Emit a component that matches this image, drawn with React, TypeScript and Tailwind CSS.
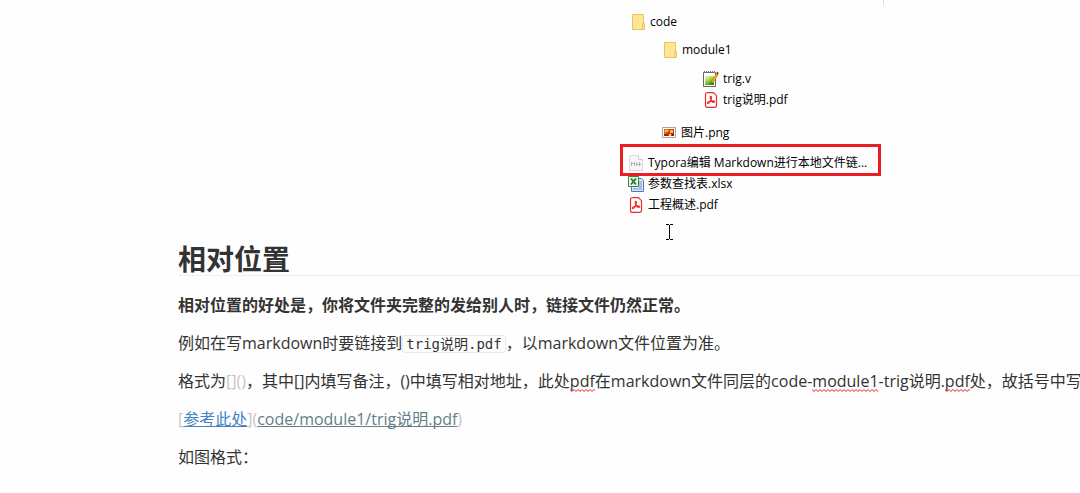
import type { ReactNode } from "react";

function FolderIcon() {
  return (
    <svg viewBox="0 0 16 16" className="size-4 shrink-0" aria-hidden="true">
      <path d="M2.5.5h11v9h1v6h-12z" fill="#ffe596" stroke="#e9c655" />
      <path d="M12.5 15.5v-5l2-1v6z" fill="#ffe596" stroke="#e9c655" />
    </svg>
  );
}

function NotepadIcon() {
  return (
    <svg viewBox="0 0 16 16" className="size-4 shrink-0" aria-hidden="true">
      <defs>
        <linearGradient id="note" x1="0" y1="0" x2="0.6" y2="1">
          <stop offset="0" stopColor="#f1f7cf" />
          <stop offset="0.5" stopColor="#a9d548" />
          <stop offset="1" stopColor="#2f8f1c" />
        </linearGradient>
      </defs>
      <path d="M.5 1.5h12v14H.5z" fill="#fff" stroke="#666" />
      <path d="M1 1h11" stroke="#777" strokeWidth="2" strokeDasharray="1 1" />
      <path d="M2 5h9v9H2z" fill="url(#note)" />
      <path d="M8.300 12.600l.5-2.600 4.600-7.600 1.900 1.200-4.700 7.400z" fill="#f3a71b" stroke="#b97a18" strokeWidth=".5" />
      <path d="M13.200 2.400l1-1.700 1.600 1-1 1.800z" fill="#a51d2c" />
      <path d="M8.300 12.800l.3-1.500.9.6z" fill="#222" />
    </svg>
  );
}

function PdfIcon() {
  return (
    <svg viewBox="0 0 16 16" className="size-4 shrink-0" aria-hidden="true">
      <path
        d="M4 .6h6.400l3.100 3.100v9.900q0 1.700-1.700 1.700H4.200q-1.700 0-1.700-1.700V2.300Q2.500.6 4.200.6z"
        fill="#fff"
        stroke="#ee2b28"
        strokeWidth="1.200"
      />
      <path
        d="M7.900 4.300c1.100 0 .9 1.600.2 3.200-.9 2.100-2.100 4-3.100 4-1 0-.9-1.200.5-1.800 1.400-.6 3.400-1 4.900-.8 1.500.200 1.500 1.500.4 1.500-1.200 0-2.700-1.500-3.300-3.200-.5-1.600-.5-2.900.4-2.900z"
        fill="none"
        stroke="#ee2b28"
        strokeWidth="1.100"
      />
    </svg>
  );
}

function PictureIcon() {
  return (
    <svg viewBox="0 0 16 16" className="size-4 shrink-0" aria-hidden="true">
      <path d="M1.500 2.500h13v10h-13z" fill="#fff" stroke="#a5a5a5" />
      <path d="M3 4h10v7H3z" fill="#c8371b" />
      <path d="M3 4h5v3H6v2H3z" fill="#e26b1d" />
      <path d="M4 5h3v2H4zM9 5h3v3H9z" fill="#f9b93c" />
      <path d="M3 9h4v2H3z" fill="#a32018" />
      <path d="M8 9h2v2H8z" fill="#ffd35a" />
      <path d="M11 9h2v2h-2z" fill="#7a1710" />
    </svg>
  );
}

function MarkdownIcon() {
  return (
    <svg viewBox="0 0 16 16" className="size-4 shrink-0" aria-hidden="true">
      <path d="M1.500.5h9l4 4v11h-13z" fill="#f6f6f6" stroke="#dcdcdc" />
      <path d="M10.500.5v4h4" fill="#fff" stroke="#cdcdcd" />
      <path d="M3.500 11V7M6.500 11V7M4 8.500h2M8.500 7v4M11.500 7v4M8 9.500h5" fill="none" stroke="#b0b0b0" />
    </svg>
  );
}

function SheetIcon() {
  return (
    <svg viewBox="0 0 16 16" className="size-4 shrink-0" aria-hidden="true">
      <path d="M5.500 2.500h8l2 2v11h-12v-5" fill="#dce8f8" stroke="#5878ac" />
      <path d="M11 5h3v8h-3zM5 12h9v2H5z" fill="#a3c0ea" />
      <path d="M.5.500h10v10H.5z" fill="#eef7ea" stroke="#3c8038" />
      <path d="M3 2.500l5 6M8 2.500l-5 6" stroke="#267a29" strokeWidth="1.900" />
    </svg>
  );
}

function FileRow({ icon, children, className = "" }: { icon: ReactNode; children: ReactNode; className?: string }) {
  return (
    <li className={`relative flex h-[21px] items-center gap-1 ${className}`}>
      {icon}
      <span>{children}</span>
    </li>
  );
}

function Misspelled({ id, children }: { id: string; children: ReactNode }) {
  return (
    <span className="relative inline-block">
      {children}
      <svg className="absolute bottom-0.5 left-0 h-[3px] w-full" aria-hidden="true">
        <defs>
          <pattern id={id} width="4" height="3" patternUnits="userSpaceOnUse">
            <path d="M-1 1.500L0 .5l2 2 2-2 1 1" fill="none" stroke="#f01818" />
          </pattern>
        </defs>
        <rect width="100%" height="3" fill={`url(#${id})`} />
      </svg>
    </span>
  );
}

export default function App() {
  return (
    <main className="min-h-screen overflow-hidden bg-[#fefefe] pl-[178px] font-['Open_Sans','Noto_Sans_CJK_SC',sans-serif] text-base text-[#333]">
      <figure className="relative ml-[442px] w-[264px] pt-[11px] text-xs whitespace-nowrap text-black">
        <span className="absolute top-0 right-0 h-[5px] w-px bg-[#dddddf]" />
        <ul>
          <FileRow icon={<FolderIcon />} className="pl-2.5">code</FileRow>
          <FileRow icon={<FolderIcon />} className="mt-[7px] pl-[42px]">module1</FileRow>
          <FileRow icon={<NotepadIcon />} className="mt-2 pl-[83px]">trig.v</FileRow>
          <FileRow icon={<PdfIcon />} className="pl-[83px]">trig说明.pdf</FileRow>
          <FileRow icon={<PictureIcon />} className="mt-3 pl-[41px]">图片.png</FileRow>
          <FileRow icon={<MarkdownIcon />} className="mt-[9px] pl-2">
            Typora编辑 Markdown进行本地文件链...
            <span className="absolute -top-2 left-0 h-8 w-[261px] border-3 border-[#ec1c24]" />
          </FileRow>
          <FileRow icon={<SheetIcon />} className="pl-2">参数查找表.xlsx</FileRow>
          <FileRow icon={<PdfIcon />} className="pl-2">工程概述.pdf</FileRow>
        </ul>
        <svg viewBox="0 0 8 17" className="absolute top-56 left-[46px] h-[17px] w-2" aria-hidden="true">
          <path d="M0 .5h3M4 .5h3M0 15.500h3M4 15.500h3M3.500 1v14" stroke="#000" fill="none" />
        </svg>
      </figure>

      <article className="pt-7 whitespace-nowrap">
        <h2 className="border-b border-[#eee] text-[28px] leading-8 font-bold">相对位置</h2>
        <div className="flex flex-col gap-3 pt-4 leading-[26px]">
          <p className="font-bold">相对位置的好处是，你将文件夹完整的发给别人时，链接文件仍然正常。</p>
          <p>
            例如在写markdown时要链接到
            <code className="rounded-[3px] border border-[#e7eaed] bg-[#fdfdfd] px-[3px] font-['DejaVu_Sans_Mono','Noto_Sans_CJK_SC',monospace] text-sm leading-4">
              trig说明.pdf
            </code>
            ，以markdown文件位置为准。
          </p>
          <p>
            格式为<span className="text-[#c8c4c4]">[]()</span>，其中[]内填写备注，()中填写相对地址，此处<Misspelled id="wave-a">pdf</Misspelled>
            在markdown文件同层的code-<Misspelled id="wave-b">module1</Misspelled>-trig说明.<Misspelled id="wave-c">pdf</Misspelled>处，故括号中写
          </p>
          <p className="text-[#c8c4c4]">
            [<a href="#reference" className="text-[#4183c4] underline">参考此处</a>](
            <a href="#trig" className="text-[#647f86] underline [text-decoration-skip-ink:none]">code/module1/trig说明.pdf</a>)
          </p>
          <p>如图格式：</p>
        </div>
      </article>
    </main>
  );
}
